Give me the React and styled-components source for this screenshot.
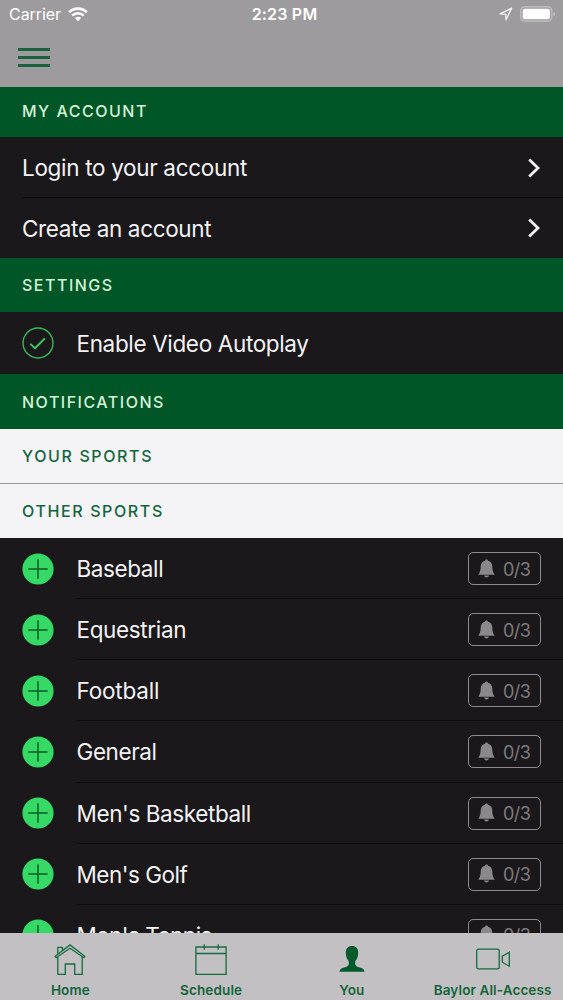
import styled, { createGlobalStyle } from "styled-components";

const sports = [
  { name: "Baseball", spacing: "-0.4px" },
  { name: "Equestrian", spacing: "-0.35px" },
  { name: "Football", spacing: "-0.2px" },
  { name: "General", spacing: "-0.4px" },
  { name: "Men's Basketball", spacing: "-0.4px" },
  { name: "Men's Golf", spacing: "-0.5px" },
  { name: "Men's Tennis", spacing: "-0.5px" },
];

export default function App() {
  return (
    <>
      <GlobalStyle />
      <Screen>
        <StatusBar>
          <Carrier>
            Carrier <WifiIcon />
          </Carrier>
          <Clock>2:23 PM</Clock>
          <Power>
            <LocationIcon />
            <BatteryIcon />
          </Power>
        </StatusBar>
        <NavBar>
          <MenuButton aria-label="Menu">
            <span />
            <span />
            <span />
          </MenuButton>
        </NavBar>
        <List>
          <SectionTitle $height={50} $lift={2}>
            MY ACCOUNT
          </SectionTitle>
          <Row $height={61}>
            <Label $spacing="-0.32px">Login to your account</Label>
            <Chevron />
            <Divider $left={22} />
          </Row>
          <Row $height={60}>
            <Label>Create an account</Label>
            <Chevron />
          </Row>
          <SectionTitle $height={54}>SETTINGS</SectionTitle>
          <Row $height={62}>
            <CheckIcon />
            <Label>Enable Video Autoplay</Label>
          </Row>
          <SectionTitle $height={55}>NOTIFICATIONS</SectionTitle>
          <SportsTitle $line>YOUR SPORTS</SportsTitle>
          <SportsTitle>OTHER SPORTS</SportsTitle>
          {sports.map((sport) => (
            <Row key={sport.name} $height={61.15}>
              <PlusIcon />
              <Label $spacing={sport.spacing}>{sport.name}</Label>
              <Alerts>
                <BellIcon />
                <Count>0/3</Count>
              </Alerts>
              <Divider $left={76} />
            </Row>
          ))}
        </List>
        <TabBar>
          <Tab>
            <HomeIcon />
            <TabName>Home</TabName>
          </Tab>
          <Tab>
            <CalendarIcon />
            <TabName>Schedule</TabName>
          </Tab>
          <Tab>
            <PersonIcon />
            <TabName>You</TabName>
          </Tab>
          <Tab>
            <VideoIcon />
            <TabName>Baylor All-Access</TabName>
          </Tab>
        </TabBar>
      </Screen>
    </>
  );
}

function WifiIcon() {
  return (
    <svg width="20" height="15" viewBox="0 0 20 15" fill="none">
      <path d="M1.2 5.3a12.6 12.6 0 0 1 17.6 0" stroke="#fff" strokeWidth="2.7" />
      <path d="M4.3 8.6a8.2 8.2 0 0 1 11.4 0" stroke="#fff" strokeWidth="2.4" />
      <path d="M10 14.2l-3.1-3.2a4.4 4.4 0 0 1 6.2 0z" fill="#fff" />
    </svg>
  );
}

function LocationIcon() {
  return (
    <svg width="14" height="14" viewBox="0 0 14 14" fill="none">
      <path
        d="M12.6 1.1 1.1 6.9l5.7.5.2 5.4z"
        stroke="#f4f4f4"
        strokeWidth="1.3"
        strokeLinejoin="round"
      />
    </svg>
  );
}

function BatteryIcon() {
  return (
    <svg width="36" height="16" viewBox="0 0 36 16" fill="none">
      <rect x="0.8" y="0.8" width="31" height="14.4" rx="3.6" stroke="#c4c2c5" strokeWidth="1.2" />
      <rect x="2.7" y="2.7" width="27.2" height="10.6" rx="2" fill="#fff" />
      <path d="M33.5 5.7c1.9.8 1.9 3.8 0 4.6z" fill="#c9c8ca" />
    </svg>
  );
}

function Chevron() {
  return (
    <svg width="14" height="20" viewBox="0 0 14 20" fill="none">
      <path d="M2.2 1.5 11 10l-8.8 8.5" stroke="#f2f2f2" strokeWidth="2.8" />
    </svg>
  );
}

function CheckIcon() {
  return (
    <RowIcon viewBox="0 0 32 32" fill="none">
      <circle cx="16" cy="16" r="15" stroke="#36bb5a" strokeWidth="1.4" />
      <path d="m8.3 16.9 4.7 4.2 9.9-9.7" stroke="#3bcd60" strokeWidth="1.9" />
    </RowIcon>
  );
}

function PlusIcon() {
  return (
    <RowIcon viewBox="0 0 32 32" fill="none">
      <circle cx="16" cy="16" r="15.6" fill="#36d965" />
      <path d="M16 6.3v19.4M6.3 16h19.4" stroke="#0b5e22" strokeWidth="1.5" />
    </RowIcon>
  );
}

function BellIcon() {
  return (
    <svg width="17" height="20" viewBox="0 0 17 20" fill="#8a888b">
      <path d="M8.5.4c.8 0 1.400.5 1.500 1.300 2.900.7 4.200 2.900 4.300 5.800.1 3.500.4 5.400 2.400 8.300H.3c2-2.900 2.300-4.800 2.400-8.300C2.800 4.600 4.100 2.400 7 1.700 7.100.9 7.700.4 8.500.4z" />
      <path d="M6 16.600h5c-.4 1.300-1.300 1.900-2.500 1.900S6.400 17.900 6 16.600z" />
    </svg>
  );
}

function HomeIcon() {
  return (
    <TabIcon width="32" height="32" viewBox="0 0 32 32" fill="none" stroke="#156b40" strokeWidth="1.3">
      <path d="M1.2 12.3 16 .9l14.800 11.400-1 1.400L16 4.300 2.200 13.700z" />
      <path d="M3.800 13v17.400h7.500V20h9.400v10.400h7.500V13" />
      <path d="M3.800 10.100V3.300h4.600v3.200" />
    </TabIcon>
  );
}

function CalendarIcon() {
  return (
    <TabIcon width="32" height="32" viewBox="0 0 32 32" fill="none" stroke="#156b40" strokeWidth="1.3">
      <path d="M.9 3h30.200v27.300H.9zM.9 9.500h30.200M9.200.2v5.500M23.200.2v5.500" />
    </TabIcon>
  );
}

function PersonIcon() {
  return (
    <TabIcon width="26" height="32" viewBox="0 0 26 32" fill="#045a2a">
      <path d="M13 2c4 0 6.200 2.500 6.200 6.400 0 3.500-1 6.700-3 8.800v3c.7 2.400 3.300 3 5.300 3.600 2.300.6 3.600 1.500 4.100 4H.4c.5-2.500 1.800-3.400 4.100-4 2-.6 4.600-1.200 5.300-3.600v-3c-2-2.100-3-5.300-3-8.800C6.800 4.500 9 2 13 2z" />
    </TabIcon>
  );
}

function VideoIcon() {
  return (
    <TabIcon width="36" height="32" viewBox="0 0 36 32" fill="none" stroke="#156b40" strokeWidth="1.3">
      <rect x="1.7" y="5.2" width="22.5" height="19.6" rx="1.6" />
      <path d="m34.300 8.200-7 4v6l7 4z" />
    </TabIcon>
  );
}

const GlobalStyle = createGlobalStyle`
  * {
    box-sizing: border-box;
  }
  body {
    margin: 0;
    background: #1a181b;
    font-family: Inter, "Liberation Sans", sans-serif;
  }
  svg {
    display: block;
    flex-shrink: 0;
  }
`;
const Screen = styled.div`
  display: flex;
  flex-direction: column;
  width: 563px;
  height: 1000px;
  overflow: hidden;
`;
const StatusBar = styled.div`
  display: grid;
  grid-template-columns: 1fr auto 1fr;
  align-items: center;
  height: 28px;
  flex-shrink: 0;
  padding: 0 7px 0 9px;
  background: #9e9b9f;
  color: #fff;
`;
const Carrier = styled.div`
  display: flex;
  align-items: center;
  gap: 7px;
  font-size: 16px;
  letter-spacing: -0.05px;
`;
const Clock = styled.div`
  padding-left: 4px;
  font-weight: 600;
  font-size: 16px;
  letter-spacing: 0.2px;
`;
const Power = styled.div`
  display: flex;
  align-items: center;
  justify-content: flex-end;
  gap: 7px;
`;
const NavBar = styled.div`
  display: flex;
  align-items: center;
  height: 59px;
  flex-shrink: 0;
  padding-left: 17.5px;
  background: #9e9b9f;
`;
const MenuButton = styled.button`
  display: flex;
  flex-direction: column;
  gap: 5px;
  padding: 0;
  border: none;
  background: none;
  span {
    width: 32px;
    height: 3px;
    background: #1b633e;
  }
`;
const List = styled.div`
  height: 846px;
  flex-shrink: 0;
  overflow: hidden;
`;
const SectionTitle = styled.div`
  display: flex;
  align-items: center;
  height: ${(props) => props.$height}px;
  padding-left: 22px;
  padding-bottom: ${(props) => props.$lift || 0}px;
  background: #005626;
  color: #d5f2d8;
  font-size: 16px;
  font-weight: 500;
  letter-spacing: 1.5px;
`;
const SportsTitle = styled(SectionTitle)`
  height: ${(props) => (props.$line ? 55 : 54)}px;
  background: #f4f3f5;
  color: #14653f;
  letter-spacing: 1.62px;
  border-bottom: ${(props) => (props.$line ? "1px solid #9c999e" : "none")};
`;
const Row = styled.div`
  position: relative;
  display: flex;
  align-items: center;
  height: ${(props) => props.$height}px;
  padding: 0 22px;
  background: #1a181b;
`;
const Divider = styled.div`
  position: absolute;
  left: ${(props) => props.$left}px;
  right: 0;
  bottom: 0;
  height: 1px;
  background: #0e0d0f;
`;
const RowIcon = styled.svg`
  width: 32px;
  height: 32px;
  margin-right: 22.5px;
`;
const Label = styled.div`
  flex: 1;
  color: #f3f2f4;
  font-size: 22.5px;
  letter-spacing: ${(props) => props.$spacing || "-0.35px"};
  white-space: nowrap;
`;
const Alerts = styled.div`
  display: flex;
  align-items: center;
  gap: 8px;
  width: 73px;
  height: 33px;
  padding-left: 9px;
  border: 1px solid #8c8a8d;
  border-radius: 5px;
`;
const Count = styled.span`
  padding-top: 1px;
  color: #7d7b7e;
  font-size: 18px;
  letter-spacing: -0.6px;
`;
const TabBar = styled.div`
  display: grid;
  grid-template-columns: repeat(4, 1fr);
  height: 67px;
  flex-shrink: 0;
  background: #c2c0c2;
`;
const Tab = styled.div`
  display: flex;
  flex-direction: column;
  align-items: center;
  padding-top: 11px;
`;
const TabIcon = styled.svg`
  height: 32px;
`;
const TabName = styled.div`
  margin-top: 6px;
  color: #12643a;
  font-size: 13.5px;
  font-weight: 600;
  line-height: 16px;
  letter-spacing: 0.12px;
  white-space: nowrap;
`;
